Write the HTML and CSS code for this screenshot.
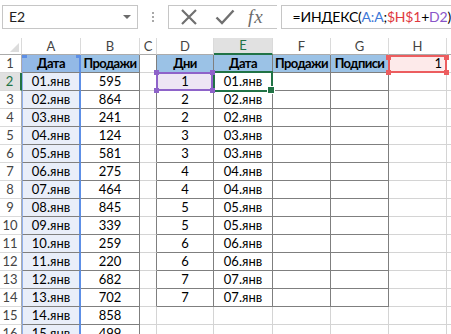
FILE: index.html
```html
<!DOCTYPE html>
<html lang="ru">
<head>
    <meta charset="UTF-8">
    <title>ИНДЕКС</title>
    <link rel="stylesheet" href="styles.css">
</head>
<body>

    <!-- строка формул -->
    <div class="formula-bar">
        <div class="name-box">
            <span class="name">E2</span>
            <span class="caret"></span>
        </div>
        <div class="dots"><i></i><i></i><i></i></div>
        <div class="fx-buttons">
            <svg class="btn-x" width="18" height="16" viewBox="0 0 18 16">
                <path d="M2 1 L16 15 M16 1 L2 15" stroke="#707070" stroke-width="2.2" fill="none"/>
            </svg>
            <svg class="btn-ok" width="20" height="16" viewBox="0 0 20 16">
                <path d="M1.5 8.5 L7 14 L18.5 1.5" stroke="#707070" stroke-width="2.4" fill="none"/>
            </svg>
            <span class="fx">fx</span>
        </div>
        <div class="formula">=ИНДЕКС(<span class="r-a">A:A</span>;<span class="r-h">$H$1</span>+<span class="r-d">D2</span>)</div>
    </div>

    <!-- лист -->
    <table class="sheet">
        <colgroup>
            <col class="w-rh"><col class="w-a"><col class="w-b"><col class="w-c"><col class="w-d">
            <col class="w-e"><col class="w-f"><col class="w-g"><col class="w-h"><col class="w-i">
        </colgroup>
        <tr class="cols">
            <th class="corner"><span class="tri"></span></th>
            <th>A</th><th>B</th><th>C</th><th>D</th><th class="active">E</th><th>F</th><th>G</th><th>H</th><th></th>
        </tr>
        <tr>
            <th class="rh">1</th>
            <td class="a hd a1">Дата</td><td class="t hd">Продажи</td><td class="c"></td>
            <td class="t hd">Дни</td><td class="t hd">Дата</td><td class="t hd">Продажи</td><td class="t hd">Подписи</td>
            <td class="h1">1</td><td></td>
        </tr>
        <tr>
            <th class="rh active">2</th>
            <td class="a">01.янв</td><td class="t">595</td><td class="c"></td>
            <td class="t d2">1</td><td class="t sel">01.янв</td><td class="t"></td><td class="t"></td><td></td><td></td>
        </tr>
        <tr>
            <th class="rh">3</th>
            <td class="a">02.янв</td><td class="t">864</td><td class="c"></td>
            <td class="t">2</td><td class="t">02.янв</td><td class="t"></td><td class="t"></td><td></td><td></td>
        </tr>
        <tr>
            <th class="rh">4</th>
            <td class="a">03.янв</td><td class="t">241</td><td class="c"></td>
            <td class="t">2</td><td class="t">02.янв</td><td class="t"></td><td class="t"></td><td></td><td></td>
        </tr>
        <tr>
            <th class="rh">5</th>
            <td class="a">04.янв</td><td class="t">124</td><td class="c"></td>
            <td class="t">3</td><td class="t">03.янв</td><td class="t"></td><td class="t"></td><td></td><td></td>
        </tr>
        <tr>
            <th class="rh">6</th>
            <td class="a">05.янв</td><td class="t">581</td><td class="c"></td>
            <td class="t">3</td><td class="t">03.янв</td><td class="t"></td><td class="t"></td><td></td><td></td>
        </tr>
        <tr>
            <th class="rh">7</th>
            <td class="a">06.янв</td><td class="t">275</td><td class="c"></td>
            <td class="t">4</td><td class="t">04.янв</td><td class="t"></td><td class="t"></td><td></td><td></td>
        </tr>
        <tr>
            <th class="rh">8</th>
            <td class="a">07.янв</td><td class="t">464</td><td class="c"></td>
            <td class="t">4</td><td class="t">04.янв</td><td class="t"></td><td class="t"></td><td></td><td></td>
        </tr>
        <tr>
            <th class="rh">9</th>
            <td class="a">08.янв</td><td class="t">845</td><td class="c"></td>
            <td class="t">5</td><td class="t">05.янв</td><td class="t"></td><td class="t"></td><td></td><td></td>
        </tr>
        <tr>
            <th class="rh">10</th>
            <td class="a">09.янв</td><td class="t">339</td><td class="c"></td>
            <td class="t">5</td><td class="t">05.янв</td><td class="t"></td><td class="t"></td><td></td><td></td>
        </tr>
        <tr>
            <th class="rh">11</th>
            <td class="a">10.янв</td><td class="t">259</td><td class="c"></td>
            <td class="t">6</td><td class="t">06.янв</td><td class="t"></td><td class="t"></td><td></td><td></td>
        </tr>
        <tr>
            <th class="rh">12</th>
            <td class="a">11.янв</td><td class="t">220</td><td class="c"></td>
            <td class="t">6</td><td class="t">06.янв</td><td class="t"></td><td class="t"></td><td></td><td></td>
        </tr>
        <tr>
            <th class="rh">13</th>
            <td class="a">12.янв</td><td class="t">682</td><td class="c"></td>
            <td class="t">7</td><td class="t">07.янв</td><td class="t"></td><td class="t"></td><td></td><td></td>
        </tr>
        <tr>
            <th class="rh">14</th>
            <td class="a">13.янв</td><td class="t">702</td><td class="c"></td>
            <td class="t">7</td><td class="t">07.янв</td><td class="t"></td><td class="t"></td><td></td><td></td>
        </tr>
        <tr>
            <th class="rh">15</th>
            <td class="a">14.янв</td><td class="t">858</td><td></td>
            <td></td><td></td><td></td><td></td><td></td><td></td>
        </tr>
        <tr>
            <th class="rh">16</th>
            <td class="a">15.янв</td><td class="t">499</td><td></td>
            <td></td><td></td><td></td><td></td><td></td><td></td>
        </tr>
    </table>

</body>
</html>
```

FILE: styles.css
```css
* {
    margin: 0;
    padding: 0;
    box-sizing: border-box;
}

body {
    font-family: 'Lato', 'Liberation Sans', sans-serif;
    background: #fff;
    color: #000;
    width: 451px;
    height: 334px;
    overflow: hidden;
}

/* строка формул */
.formula-bar {
    display: flex;
    align-items: center;
    height: 30px;
    padding: 3px 0 0 2px;
    margin-bottom: 8px;
}

.name-box {
    display: flex;
    align-items: center;
    justify-content: space-between;
    width: 138px;
    height: 24px;
    border: 1px solid #c6c6c6;
    padding: 0 6px 0 6px;
    font-size: 14px;
    color: #222;
}

.caret {
    width: 0;
    height: 0;
    border-left: 4px solid transparent;
    border-right: 4px solid transparent;
    border-top: 4px solid #6b6b6b;
}

.dots {
    display: flex;
    flex-direction: column;
    gap: 2px;
    margin: 0 14px 0 14px;
}

.dots i {
    width: 2px;
    height: 2px;
    background: #a8a8a8;
}

.fx-buttons {
    display: flex;
    align-items: center;
    width: 110px;
    height: 24px;
    border: 1px solid #c6c6c6;
    border-right: none;
    padding-left: 11px;
}

.btn-x {
    margin-right: 17px;
}

.btn-ok {
    margin-right: 13px;
}

.fx {
    font-family: 'Liberation Serif', serif;
    font-style: italic;
    font-size: 19px;
    color: #6b6b6b;
    letter-spacing: 1px;
}

.formula {
    flex: 1;
    height: 24px;
    border: 1px solid #c6c6c6;
    border-right: none;
    margin-left: 4px;
    padding-left: 11px;
    font-size: 14px;
    letter-spacing: -0.2px;
    line-height: 22px;
    white-space: nowrap;
}

.r-a { color: #3c78d8; }
.r-h { color: #e0383e; }
.r-d { color: #8a55c8; }

/* лист */
.sheet {
    border-collapse: separate;
    border-spacing: 0;
    table-layout: fixed;
    width: 467px;
    font-size: 13px;
}

.w-rh { width: 22px; }
.w-a { width: 59px; }
.w-b { width: 59px; }
.w-c { width: 17px; }
.w-d { width: 57px; }
.w-e { width: 59px; }
.w-f { width: 58px; }
.w-g { width: 58px; }
.w-h { width: 58px; }
.w-i { width: 20px; }

.sheet th {
    font-weight: normal;
    color: #444;
    font-size: 13px;
}

.cols th {
    height: 16px;
    line-height: 15px;
    border-right: 1px solid #dadada;
    border-bottom: 1px solid #ababab;
    position: relative;
}

.cols th.active {
    background: #e1e1e1;
    color: #217346;
    border-bottom: 2px solid #217346;
}

.corner .tri {
    position: absolute;
    right: 2px;
    bottom: 2px;
    width: 0;
    height: 0;
    border-left: 9px solid transparent;
    border-bottom: 9px solid #dcdcdc;
}

.rh {
    height: 18px;
    line-height: 17px;
    text-align: center;
    padding-right: 1px;
    border-right: 1px solid #ababab;
    border-bottom: 1px solid #dadada;
}

.rh.active {
    background: #e1e1e1;
    color: #217346;
    border-right: 2px solid #217346;
}

.sheet td {
    height: 18px;
    line-height: 17px;
    padding: 0 2px;
    text-align: center;
    white-space: nowrap;
    overflow: visible;
    border-right: 1px solid #d4d4d4;
    border-bottom: 1px solid #d4d4d4;
}

.sheet td.t {
    border-right-color: #7f7f7f;
    border-bottom-color: #7f7f7f;
}

.sheet td.c {
    border-right-color: #7f7f7f;
}

.sheet td.hd {
    background: #9bc2e6;
    font-weight: bold;
    letter-spacing: -0.6px;
    padding: 0;
}

/* диапазон A:A */
.sheet td.a {
    background: #e9eef9;
    border-left: 1px solid #8fb0ee;
    border-right: 2px solid #5d8fe6;
    border-bottom-color: #7f7f7f;
}

.sheet td.a.hd {
    background: #93b9e6;
}

.sheet td.a1 {
    position: relative;
}

.a1::before {
    content: "";
    position: absolute;
    top: 0;
    left: -1px;
    right: -2px;
    height: 3px;
    background:
        linear-gradient(#5d8fe6, #5d8fe6) left top / 5px 3px no-repeat,
        linear-gradient(#5d8fe6, #5d8fe6) right top / 5px 3px no-repeat;
}

/* ссылка D2 */
.sheet td.d2 {
    position: relative;
    background: #ede6f4;
}

.d2::after {
    content: "";
    position: absolute;
    left: -1px;
    top: -1px;
    right: 0;
    bottom: -1px;
    border: 2px solid #8e63c9;
    z-index: 2;
}

.d2::before {
    content: "";
    position: absolute;
    left: -3px;
    top: -3px;
    right: -2px;
    bottom: -3px;
    z-index: 3;
    background:
        linear-gradient(#8e63c9, #8e63c9) left top / 5px 5px no-repeat,
        linear-gradient(#8e63c9, #8e63c9) right top / 5px 5px no-repeat,
        linear-gradient(#8e63c9, #8e63c9) left bottom / 5px 5px no-repeat,
        linear-gradient(#8e63c9, #8e63c9) right bottom / 5px 5px no-repeat;
}

/* активная ячейка E2 */
.sheet td.sel {
    position: relative;
}

.sel::after {
    content: "";
    position: absolute;
    left: -1px;
    top: -2px;
    right: -1px;
    bottom: -2px;
    border: 2px solid #217346;
    z-index: 2;
}

.sel::before {
    content: "";
    position: absolute;
    right: -3px;
    bottom: -4px;
    width: 6px;
    height: 6px;
    background: #217346;
    border: 1px solid #fff;
    z-index: 3;
}

/* ссылка $H$1 */
.sheet td.h1 {
    position: relative;
    background: #fdeaea;
    text-align: right;
    padding-right: 4px;
}

.h1::after {
    content: "";
    position: absolute;
    left: -1px;
    top: 0;
    right: -1px;
    bottom: -1px;
    border: 2px solid #ec5d5f;
    z-index: 2;
}

.h1::before {
    content: "";
    position: absolute;
    left: -3px;
    top: 0;
    right: -3px;
    bottom: -3px;
    z-index: 3;
    background:
        linear-gradient(#ec5d5f, #ec5d5f) left top / 5px 5px no-repeat,
        linear-gradient(#ec5d5f, #ec5d5f) right top / 5px 5px no-repeat,
        linear-gradient(#ec5d5f, #ec5d5f) left bottom / 5px 5px no-repeat,
        linear-gradient(#ec5d5f, #ec5d5f) right bottom / 5px 5px no-repeat;
}
```
